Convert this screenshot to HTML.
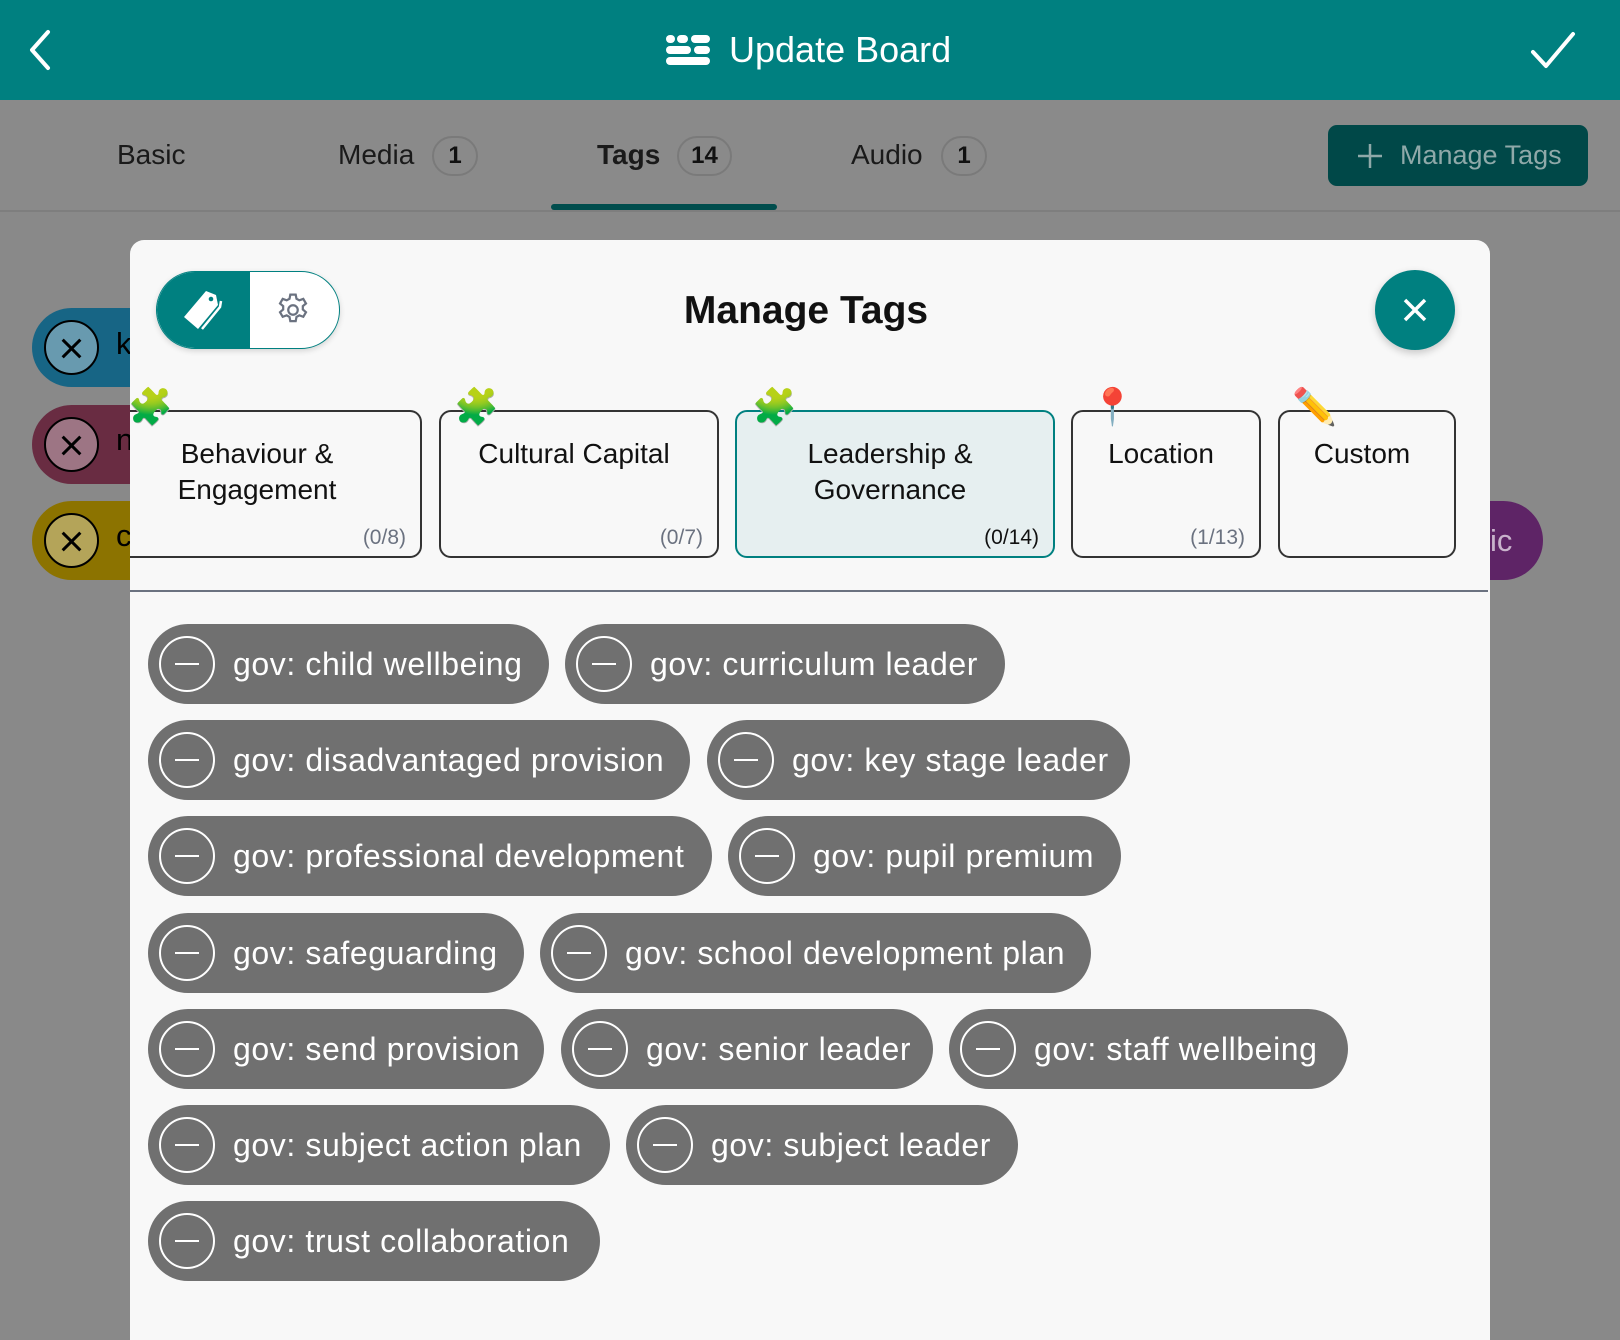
<!DOCTYPE html>
<html><head><meta charset="utf-8">
<style>
*{box-sizing:border-box;margin:0;padding:0}
body{width:1620px;height:1311px;overflow:hidden;background:#898989;font-family:"Liberation Sans",sans-serif;position:relative}
.abs{position:absolute}
.hdr{left:0;top:0;width:1620px;height:100px;background:#008080}
.tabs{left:0;top:100px;width:1620px;height:112px;background:#8a8a8a;border-bottom:2px solid #7e7e7e}
.tab{position:absolute;top:138px;font-size:28px;color:#1a1a1a;line-height:34px}
.badge{position:absolute;top:136px;height:40px;border:2px solid #7a7a7a;border-radius:20px;font-size:24px;line-height:36px;text-align:center;color:#111;font-weight:bold}
.pill{position:absolute;left:32px;width:200px;height:79px;border-radius:40px}
.pill .c{position:absolute;left:12px;top:12px;width:55px;height:55px;border-radius:50%;border:2px solid #000;background:rgba(255,255,255,.35)}
.pill .c:before,.pill .c:after{content:"";position:absolute;left:13px;top:24.5px;width:25px;height:3px;background:#000;transform:rotate(45deg)}
.pill .c:after{transform:rotate(-45deg)}
.modal{left:130px;top:240px;width:1360px;height:1100px;background:#f8f8f8;border-radius:14px 14px 0 0}
.card{position:absolute;top:410px;height:148px;border:2px solid #333;border-radius:12px;background:#f8f8f8;text-align:center;font-size:28px;line-height:36px;color:#111;padding-top:24px;padding-right:10px}
.card .n{position:absolute;right:14px;bottom:6px;font-size:21px;color:#6b7280;line-height:24px}
.emo{position:absolute;font-size:36px;line-height:40px;top:388px;font-family:"DejaVu Sans",sans-serif}
.chip{position:absolute;height:80px;border-radius:40px;background:#707070;color:#fff;font-size:32px;letter-spacing:0.6px;line-height:80px;padding-left:85px;white-space:nowrap}
.chip:before{content:"";position:absolute;left:11px;top:12px;width:56px;height:56px;border-radius:50%;border:2px solid #fff;box-sizing:border-box}
.chip:after{content:"";position:absolute;left:27px;top:39px;width:24px;height:2px;background:#fff}
</style></head><body>
<div class="abs hdr"></div>
<svg class="abs" style="left:24px;top:28px" width="30" height="44" viewBox="0 0 30 44"><path d="M24 4 L8 22 L24 40" fill="none" stroke="#fff" stroke-width="4" stroke-linecap="round" stroke-linejoin="round"/></svg>
<svg class="abs" style="left:666px;top:35px" width="45" height="31" viewBox="0 0 45 31">
<g fill="#fff"><rect x="0" y="0" width="9" height="8" rx="4"/><rect x="11" y="0" width="11" height="8" rx="4"/><rect x="25" y="0" width="19" height="8" rx="4"/>
<rect x="0" y="11" width="25" height="8" rx="4"/><rect x="28" y="11" width="16" height="8" rx="4"/><rect x="0" y="22" width="44" height="8" rx="4"/></g></svg>
<div class="abs" style="left:729px;top:28px;font-size:36px;color:#fff;line-height:44px">Update Board</div>
<svg class="abs" style="left:1530px;top:30px" width="46" height="40" viewBox="0 0 46 40"><path d="M3 22 L16 36 L43 4" fill="none" stroke="#fff" stroke-width="4" stroke-linecap="round" stroke-linejoin="round"/></svg>

<div class="abs tabs"></div>
<div class="tab" style="left:117px">Basic</div>
<div class="tab" style="left:338px">Media</div><div class="badge" style="left:432px;width:46px">1</div>
<div class="tab" style="left:597px;font-weight:bold">Tags</div><div class="badge" style="left:677px;width:55px">14</div>
<div class="tab" style="left:851px">Audio</div><div class="badge" style="left:941px;width:46px">1</div>
<div class="abs" style="left:551px;top:204px;width:226px;height:6px;background:#004d4d;border-radius:3px"></div>
<div class="abs" style="left:1328px;top:125px;width:260px;height:61px;background:#004848;border-radius:9px;color:#8fa9a9;font-size:27px;line-height:61px;padding-left:72px">Manage Tags</div>
<svg class="abs" style="left:1357px;top:143px" width="26" height="26"><path d="M13 1V25M1 13H25" stroke="#8fa9a9" stroke-width="2.5"/></svg>

<div class="pill" style="top:308px;background:#176585"><div class="c"></div></div>
<div class="pill" style="top:405px;background:#692c42"><div class="c"></div></div>
<div class="pill" style="top:501px;background:#8c7300"><div class="c"></div></div>
<div class="abs" style="left:116px;top:326px;font-size:31px">k</div>
<div class="abs" style="left:116px;top:422px;font-size:31px">n</div>
<div class="abs" style="left:116px;top:518px;font-size:31px">c</div>
<div class="abs" style="left:1380px;top:501px;width:163px;height:79px;border-radius:40px;background:#5e2466;color:#c9b3cc;font-size:31px;line-height:79px;padding-left:110px">ic</div>

<div class="abs modal"></div>
<div class="abs" style="left:156px;top:271px;width:184px;height:78px;border-radius:39px;border:1.5px solid #008080;background:#fff;overflow:hidden;box-shadow:0 2px 6px rgba(0,0,0,.15)">
 <div style="position:absolute;left:0;top:0;width:93px;height:78px;background:#008080"></div></div>
<svg class="abs" style="left:180px;top:287px" width="46" height="46" viewBox="0 0 46 46">
<path d="M26 4 L36 8 L38 18 L18 42 L4 30 Z" fill="#fff"/><circle cx="31" cy="12" r="2.3" fill="#008080"/>
<path d="M41 14 L40 20 L22 42" fill="none" stroke="#fff" stroke-width="2.5"/></svg>
<svg class="abs" style="left:274px;top:291px" width="38" height="38" viewBox="0 0 24 24"><path fill="none" stroke="#6b7280" stroke-width="1.4" d="M10.3 2.3h3.4l.5 2.6 1.8 1 2.5-.9 1.7 2.9-2 1.7v2.1l2 1.7-1.7 2.9-2.5-.9-1.8 1-.5 2.6h-3.4l-.5-2.6-1.8-1-2.5.9-1.7-2.9 2-1.7v-2.1l-2-1.7 1.7-2.9 2.5.9 1.8-1z"/><circle cx="12" cy="12" r="3" fill="none" stroke="#6b7280" stroke-width="1.4"/></svg>
<div class="abs" style="left:556px;top:289px;width:500px;text-align:center;font-size:39px;font-weight:bold;color:#111;line-height:44px">Manage Tags</div>
<div class="abs" style="left:1375px;top:270px;width:80px;height:80px;border-radius:50%;background:#008080;box-shadow:0 3px 8px rgba(0,0,0,.2)"></div>
<svg class="abs" style="left:1402px;top:297px" width="26" height="26"><path d="M3 3L23 23M23 3L3 23" stroke="#fff" stroke-width="3.5"/></svg>

<div class="card" style="left:130px;width:292px;border-left:none;border-radius:0 12px 12px 0;padding-right:36px">Behaviour &amp;<br>Engagement<div class="n">(0/8)</div></div>
<div class="card" style="left:439px;width:280px">Cultural Capital<div class="n">(0/7)</div></div>
<div class="card" style="left:735px;width:320px;background:#e6eff0;border-color:#008080">Leadership &amp;<br>Governance<div class="n" style="color:#111">(0/14)</div></div>
<div class="card" style="left:1071px;width:190px">Location<div class="n">(1/13)</div></div>
<div class="card" style="left:1278px;width:178px">Custom</div>
<div class="emo" style="left:128px">🧩</div>
<div class="emo" style="left:454px">🧩</div>
<div class="emo" style="left:752px">🧩</div>
<div class="emo" style="left:1090px">📍</div>
<div class="emo" style="left:1292px">✏️</div>
<div class="abs" style="left:130px;top:590px;width:1358px;height:2px;background:#6b7280"></div>

<div class="chip" style="left:148px;top:624px;width:401px">gov: child wellbeing</div>
<div class="chip" style="left:565px;top:624px;width:440px">gov: curriculum leader</div>
<div class="chip" style="left:148px;top:720px;width:542px">gov: disadvantaged provision</div>
<div class="chip" style="left:707px;top:720px;width:423px">gov: key stage leader</div>
<div class="chip" style="left:148px;top:816px;width:564px">gov: professional development</div>
<div class="chip" style="left:728px;top:816px;width:393px">gov: pupil premium</div>
<div class="chip" style="left:148px;top:913px;width:376px">gov: safeguarding</div>
<div class="chip" style="left:540px;top:913px;width:551px">gov: school development plan</div>
<div class="chip" style="left:148px;top:1009px;width:396px">gov: send provision</div>
<div class="chip" style="left:561px;top:1009px;width:372px">gov: senior leader</div>
<div class="chip" style="left:949px;top:1009px;width:399px">gov: staff wellbeing</div>
<div class="chip" style="left:148px;top:1105px;width:462px">gov: subject action plan</div>
<div class="chip" style="left:626px;top:1105px;width:392px">gov: subject leader</div>
<div class="chip" style="left:148px;top:1201px;width:452px">gov: trust collaboration</div>
</body></html>
